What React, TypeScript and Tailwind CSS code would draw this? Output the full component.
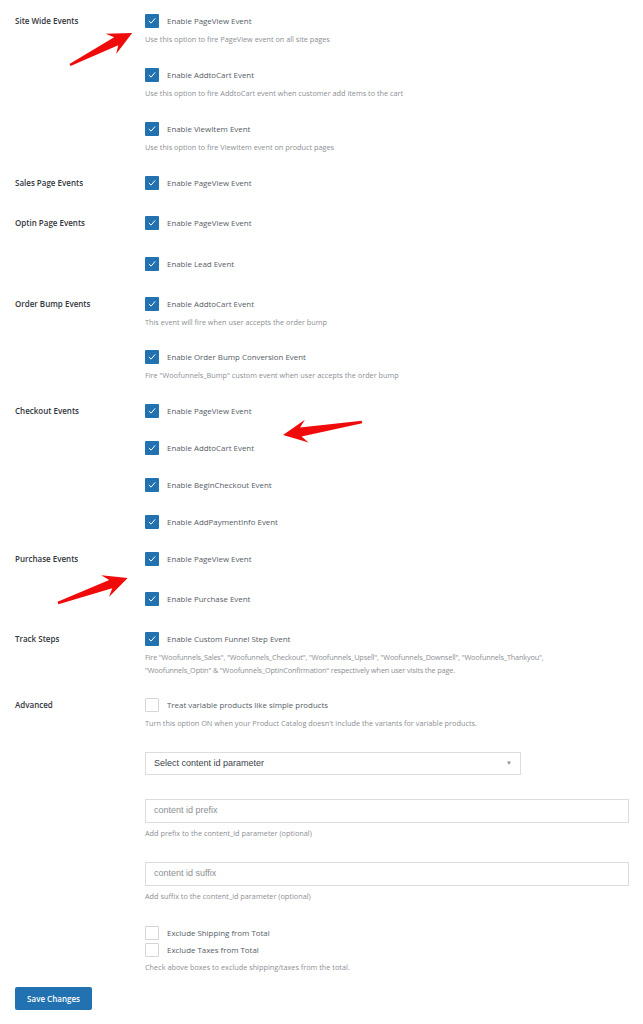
import React from 'react';

const Check = ({ checked = true }: { checked?: boolean }) => {
  if (!checked) {
    return <span className="block w-[14px] h-[14px] shrink-0 border border-[#d5d5d5] bg-white rounded-[1px]" />;
  }
  return (
    <span className="flex items-center justify-center w-[14px] h-[14px] shrink-0 bg-[#2271b1] rounded-[1px]">
      <svg viewBox="0 0 14 14" className="w-[10px] h-[10px]">
        <path d="M3 7.4 L5.7 10 L11 3.8" fill="none" stroke="white" strokeWidth="1.4" strokeLinecap="round" strokeLinejoin="round" />
      </svg>
    </span>
  );
};

const Item = ({
  text,
  desc,
  checked = true,
  className = '',
}: {
  text: string;
  desc?: React.ReactNode;
  checked?: boolean;
  className?: string;
}) => (
  <div className={className}>
    <div className="flex items-center h-[14px] gap-[8px]">
      <Check checked={checked} />
      <span className="text-[7.9px] leading-[14px] text-[#555d66]">{text}</span>
    </div>
    {desc && <p className="mt-[5px] text-[7.3px] leading-[13px] text-[#8c8f94]">{desc}</p>}
  </div>
);

const Row = ({
  label,
  className = '',
  children,
}: {
  label: string;
  className?: string;
  children: React.ReactNode;
}) => (
  <div className={`flex ${className}`}>
    <div className="w-[130px] shrink-0 text-[8px] leading-[14px] font-semibold text-[#32373c]">{label}</div>
    <div className="w-[484px]">{children}</div>
  </div>
);

const Arrow = ({ x, y, len, angle }: { x: number; y: number; len: number; angle: number }) => {
  const L = len;
  const pts = `0,-1.2 ${L - 18},-4.5 ${L - 24},-11.5 ${L},0 ${L - 24},11.5 ${L - 18},4.5 0,1.2`;
  return <polygon points={pts} fill="#f00a0a" transform={`translate(${x} ${y}) rotate(${angle})`} />;
};

const fieldFont = { fontFamily: '"Liberation Sans", Arial, sans-serif' };

export default function App() {
  return (
    <div
      className="relative w-full min-h-[1024px] bg-white pl-[15px] pt-[14px]"
      style={{ fontFamily: '"Open Sans", "Noto Sans", sans-serif' }}
    >
      <Row label="Site Wide Events">
        <Item text="Enable PageView Event" desc="Use this option to fire PageView event on all site pages" />
        <Item
          className="mt-[22px]"
          text="Enable AddtoCart Event"
          desc="Use this option to fire AddtoCart event when customer add items to the cart"
        />
        <Item
          className="mt-[22px]"
          text="Enable ViewItem Event"
          desc="Use this option to fire ViewItem event on product pages"
        />
      </Row>

      <Row label="Sales Page Events" className="mt-[22px]">
        <Item text="Enable PageView Event" />
      </Row>

      <Row label="Optin Page Events" className="mt-[26px]">
        <Item text="Enable PageView Event" />
        <Item className="mt-[27px]" text="Enable Lead Event" />
      </Row>

      <Row label="Order Bump Events" className="mt-[26px]">
        <Item text="Enable AddtoCart Event" desc="This event will fire when user accepts the order bump" />
        <Item
          className="mt-[21px]"
          text="Enable Order Bump Conversion Event"
          desc={'Fire "Woofunnels_Bump" custom event when user accepts the order bump'}
        />
      </Row>

      <Row label="Checkout Events" className="mt-[22px]">
        <Item text="Enable PageView Event" />
        <Item className="mt-[23px]" text="Enable AddtoCart Event" />
        <Item className="mt-[23px]" text="Enable BeginCheckout Event" />
        <Item className="mt-[23px]" text="Enable AddPaymentInfo Event" />
      </Row>

      <Row label="Purchase Events" className="mt-[23px]">
        <Item text="Enable PageView Event" />
        <Item className="mt-[26px]" text="Enable Purchase Event" />
      </Row>

      <Row label="Track Steps" className="mt-[26px]">
        <Item
          text="Enable Custom Funnel Step Event"
          desc={
            <span className="tracking-[-0.15px]">
              Fire "Woofunnels_Sales", "Woofunnels_Checkout", "Woofunnels_Upsell", "Woofunnels_Downsell", "Woofunnels_Thankyou",
              <br />
              "Woofunnels_Optin" &amp; "Woofunnels_OptinConfirmation" respectively when user visits the page.
            </span>
          }
        />
      </Row>

      <Row label="Advanced" className="mt-[21px]">
        <Item
          checked={false}
          text="Treat variable products like simple products"
          desc="Turn this option ON when your Product Catalog doesn't include the variants for variable products."
        />
        <div className="mt-[22px] w-[376px] h-[23px] border border-[#dcdcde] flex items-center justify-between px-[8px]">
          <span className="text-[9px] text-[#3c434a]" style={fieldFont}>Select content id parameter</span>
          <span className="text-[6px] text-[#8c8f94]">▼</span>
        </div>
        <div className="mt-[24px] h-[24px] border border-[#dcdcde] flex items-center px-[8px]">
          <span className="text-[9px] text-[#8c8f94]" style={fieldFont}>content id prefix</span>
        </div>
        <p className="mt-[4px] text-[7.3px] leading-[13px] text-[#8c8f94]">Add prefix to the content_id parameter (optional)</p>
        <div className="mt-[22px] h-[24px] border border-[#dcdcde] flex items-center px-[8px]">
          <span className="text-[9px] text-[#8c8f94]" style={fieldFont}>content id suffix</span>
        </div>
        <p className="mt-[4px] text-[7.3px] leading-[13px] text-[#8c8f94]">Add suffix to the content_id parameter (optional)</p>
        <Item className="mt-[23px]" checked={false} text="Exclude Shipping from Total" />
        <Item className="mt-[3px]" checked={false} text="Exclude Taxes from Total" />
        <p className="mt-[4px] text-[7.3px] leading-[13px] text-[#8c8f94]">Check above boxes to exclude shipping/taxes from the total.</p>
      </Row>

      <button className="mt-[13px] w-[77px] h-[23px] bg-[#2271b1] rounded-[2px] text-white text-[8px] font-semibold">
        Save Changes
      </button>

      <svg className="absolute left-0 top-0 w-[643px] h-[1024px] pointer-events-none" viewBox="0 0 643 1024">
        <Arrow x={70} y={65} len={70} angle={-27.3} />
        <Arrow x={362} y={422} len={80} angle={170.7} />
        <Arrow x={58} y={603} len={74} angle={-19.7} />
      </svg>
    </div>
  );
}
